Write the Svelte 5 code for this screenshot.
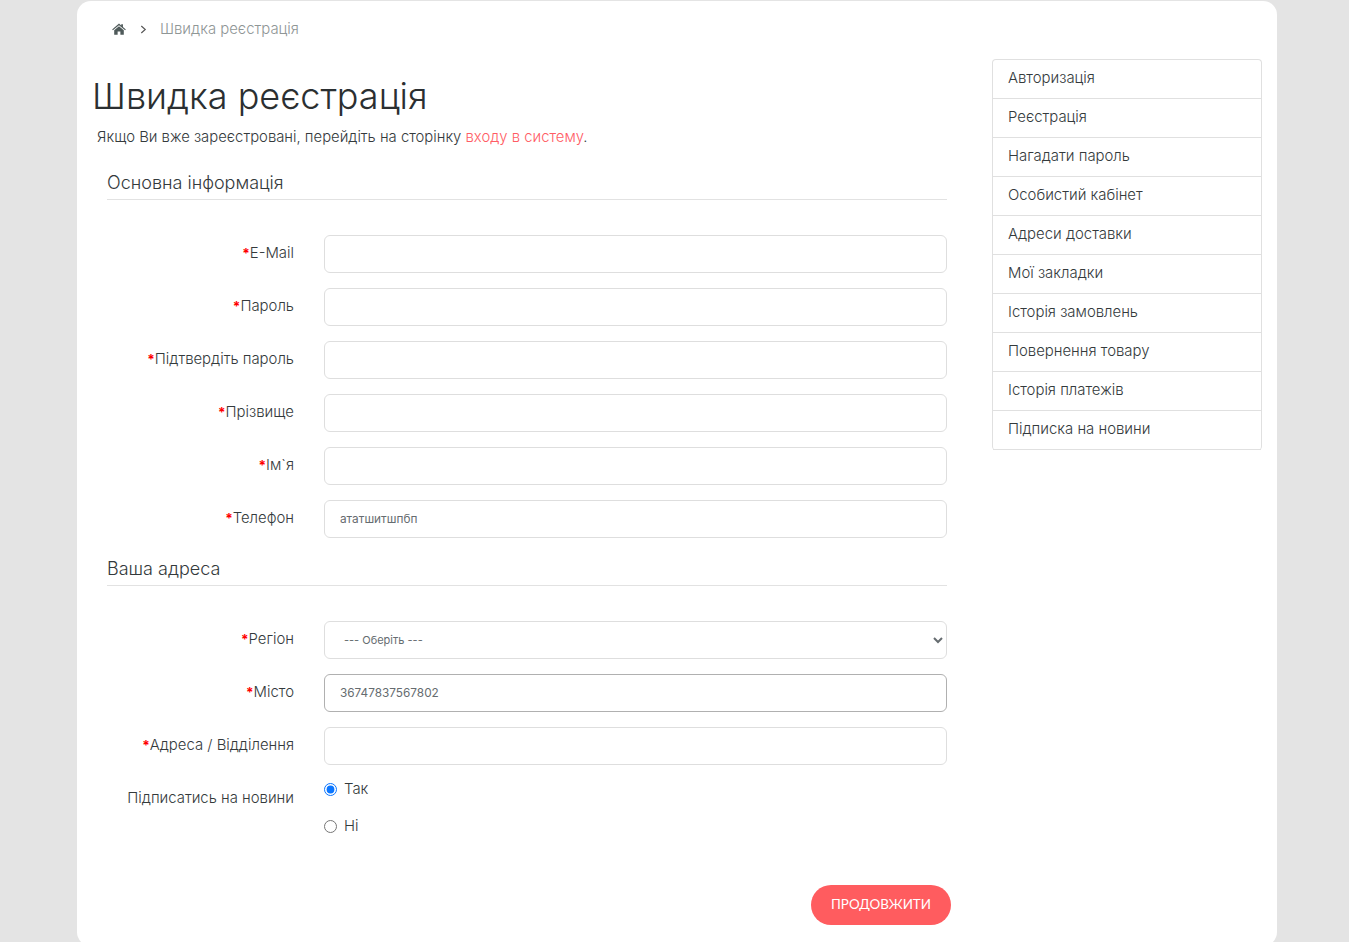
<script>
  const main = [
    { label: 'E-Mail', req: true, value: '', type: 'email' },
    { label: 'Пароль', req: true, value: '', type: 'password' },
    { label: 'Підтвердіть пароль', req: true, value: '', type: 'password' },
    { label: 'Прізвище', req: true, value: '', type: 'text' },
    { label: 'Ім`я', req: true, value: '', type: 'text' },
    { label: 'Телефон', req: true, value: 'ататшитшпбп', type: 'text' }
  ];
  const links = ['Авторизація', 'Реєстрація', 'Нагадати пароль', 'Особистий кабінет', 'Адреси доставки', 'Мої закладки', 'Історія замовлень', 'Повернення товару', 'Історія платежів', 'Підписка на новини'];
</script>

<div class="page">
  <div class="shell">
    <nav class="crumbs">
      <svg class="home" viewBox="0 0 16 14" width="14" height="12" aria-hidden="true"><path fill="#4f5a5a" d="M8 0.6 L10.6 2.9 V1.4 H12.6 V4.7 L16 7.6 L15.1 8.6 L8 2.5 L0.9 8.6 L0 7.6 Z M2.4 8.6 L8 3.8 L13.6 8.6 V13.6 H9.6 V9.8 H6.4 V13.6 H2.4 Z"/></svg>
      <svg class="sep" viewBox="0 0 8 10" width="7" height="9" aria-hidden="true"><path d="M1.5 1 L6 5 L1.5 9" fill="none" stroke="#555" stroke-width="1.3"/></svg>
      <span>Швидка реєстрація</span>
    </nav>
    <div class="columns">
      <main class="content">
        <h1>Швидка реєстрація</h1>
        <p class="intro">Якщо Ви вже зареєстровані, перейдіть на сторінку <a href="#login">входу в систему</a>.</p>
        <form onsubmit={(e) => e.preventDefault()}>
          <fieldset>
            <legend>Основна інформація</legend>
            {#each main as f}
              <div class="row">
                <label class="lbl">{#if f.req}<b>*</b>{/if}{f.label}</label>
                <input class="ctl" type={f.type} value={f.value} />
              </div>
            {/each}
          </fieldset>
          <fieldset class="second">
            <legend>Ваша адреса</legend>
            <div class="row">
              <label class="lbl"><b>*</b>Регіон</label>
              <select class="ctl sel"><option>--- Оберіть ---</option></select>
            </div>
            <div class="row">
              <label class="lbl"><b>*</b>Місто</label>
              <input class="ctl focus" type="text" value="36747837567802" />
            </div>
            <div class="row">
              <label class="lbl"><b>*</b>Адреса / Відділення</label>
              <input class="ctl" type="text" />
            </div>
            <div class="row radios">
              <span class="lbl">Підписатись на новини</span>
              <div class="choices">
                <label class="choice"><input type="radio" name="news" checked />Так</label>
                <label class="choice"><input type="radio" name="news" />Ні</label>
              </div>
            </div>
          </fieldset>
          <div class="actions"><button type="submit">ПРОДОВЖИТИ</button></div>
        </form>
      </main>
      <aside class="side">
        {#each links as l}<a href="#x">{l}</a>{/each}
      </aside>
    </div>
  </div>
</div>

<style>
  :global(body) { margin: 0; background: #e4e4e4; }
  .page { font-family: Inter, "Noto Sans", sans-serif; color: #343a3c; font-size: 14.9px; font-weight: 350; }
  .shell {
    width: 1200px; box-sizing: border-box; margin: 0 0 0 77px; position: relative; top: 1px;
    height: 945px; background: #fff; border-radius: 14px; padding: 0 15px;
  }
  .crumbs { height: 56px; display: flex; align-items: center; padding-left: 20px; color: #8f9696; font-size: 14.9px; box-sizing: border-box; }
  .home { margin-right: 14px; }
  .sep { margin-right: 13px; }
  .columns { display: flex; margin-top: 2px; }
  .content { width: 859px; }
  h1 { margin: 17px 0 0; font-size: 36px; font-weight: 300; line-height: 40px; color: #2b2f31; }
  .intro { margin: 10px 0 0 5px; font-size: 14.85px; line-height: 22px; }
  .intro a { color: #ff5c64; text-decoration: none; }
  fieldset { border: 0; margin: 0 0 0 15px; padding: 0; width: 840px; }
  legend { display: block; width: 100%; padding: 0; margin: 0 0 35px; font-size: 18px; line-height: 25px; padding-bottom: 4px; border-bottom: 1px solid #e2e2e2; font-weight: 350; }
  form > fieldset:first-child { margin-top: 22px; }
  fieldset.second { margin-top: 3px; }
  .row { display: flex; margin-bottom: 15px; }
  .lbl { width: 187px; text-align: right; padding: 7px 30px 0 0; line-height: 22px; box-sizing: content-box; }
  .lbl b { color: #f00; font-weight: 700; font-size: 13.5px; }
  .ctl { width: 623px; height: 38px; box-sizing: border-box; border: 1px solid #dedede; border-radius: 6px; background: #fff; padding: 0 15px; font: 11.8px Inter, sans-serif; color: #666c70; outline: 0; }
  .sel { padding-left: 15px; font-size: 11px; }
  .focus { border-color: #b0b0b0; }
  .radios { margin-bottom: 0; }
  .radios .lbl { padding-top: 7px; }
  .choices { display: flex; flex-direction: column; margin-top: -5px; }
  .choice { display: flex; align-items: center; height: 37px; line-height: 37px; font-size: 14.9px; margin-top: -4px; margin-bottom: 4px; }
  .choice input { width: 13px; height: 13px; margin: 0 7px 0 0; accent-color: #0b76ff; }
  .actions { display: flex; justify-content: flex-end; width: 859px; margin-top: 36px; }
  button { width: 140px; height: 40px; border: 0; border-radius: 20px; background: #ff5c5f; color: #fff; font: 13.4px Lato, sans-serif; padding: 0 0 3px; }
  .side { width: 270px; margin-left: 41px; border: 1px solid #e0e0e0; border-bottom: 0; border-radius: 4px; box-sizing: border-box; align-self: flex-start; }
  .side a { display: block; height: 39px; box-sizing: border-box; padding: 0 15px; line-height: 36px; color: #343a3c; text-decoration: none; border-bottom: 1px solid #e0e0e0; font-size: 14.9px; }
</style>
